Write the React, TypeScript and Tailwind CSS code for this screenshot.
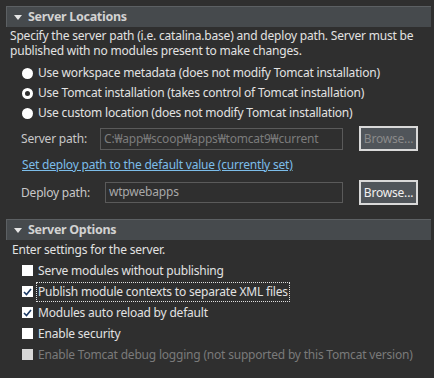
import React from "react";

const font = { fontFamily: '"Noto Sans", "Noto Sans CJK KR", sans-serif', letterSpacing: "-0.2px" };

function SectionHeader({ title }: { title: string }) {
  return (
    <div className="flex h-[21px] items-center border-t border-l border-[#5c6063] bg-[#464a4d] pl-[7px]">
      <svg width="8" height="5" viewBox="0 0 8 5" className="mr-[6px]">
        <path d="M0 0 H8 L4 5 Z" fill="#e6e6e6" />
      </svg>
      <span className="text-[12.5px] font-bold leading-none tracking-[-0.3px] text-[#d2d2d2]">{title}</span>
    </div>
  );
}

function Radio({ label, kind }: { label: string; kind: "solid" | "ring" }) {
  return (
    <div className="flex h-[20px] items-center pl-[16px]">
      {kind === "solid" ? (
        <span className="h-[11px] w-[11px] rounded-full bg-white" />
      ) : (
        <span className="h-[11px] w-[11px] rounded-full border-[3px] border-white bg-[#2f2f2f]" />
      )}
      <span className="ml-[5px] text-[12px] text-[#e2e2e2]">{label}</span>
    </div>
  );
}

function Check({
  label,
  checked = false,
  disabled = false,
  focused = false,
}: {
  label: string;
  checked?: boolean;
  disabled?: boolean;
  focused?: boolean;
}) {
  return (
    <div className="flex h-[21px] items-center pl-[16px]">
      <span
        className={
          disabled
            ? "flex h-[11px] w-[11px] items-center justify-center bg-[#d8d8d8]"
            : "flex h-[11px] w-[11px] items-center justify-center bg-white"
        }
      >
        {checked && (
          <svg width="9" height="8" viewBox="0 0 9 8">
            <path d="M1 4 L3.5 6.5 L8 1" fill="none" stroke="#1d3a64" strokeWidth="1.6" />
          </svg>
        )}
      </span>
      <span
        className={
          (focused ? "ml-[4px] px-[1px] outline-1 outline-dotted outline-[#e0e0e0] " : "ml-[5px] ") +
          (disabled ? "text-[12px] text-[#7a7a7a]" : "text-[12px] text-[#e2e2e2]")
        }
      >
        {label}
      </span>
    </div>
  );
}

function BrowseButton({ disabled = false }: { disabled?: boolean }) {
  return (
    <button
      className={
        "ml-[16px] h-[25px] w-[59px] border-[2px] border-[#d9d9d9] bg-[#50555a] text-[12px] " +
        (disabled ? "text-[#8a8a8a]" : "text-[#f0f0f0]")
      }
    >
      Browse...
    </button>
  );
}

export default function App() {
  return (
    <div className="h-[378px] w-[434px] overflow-hidden bg-[#2f2f2f] pl-[6px] pr-[3px] pt-[6px]" style={font}>
      <SectionHeader title="Server Locations" />
      <div className="pl-[4px] pt-[1px] text-[12px] leading-[15px] text-[#e2e2e2]">
        <div>Specify the server path (i.e. catalina.base) and deploy path. Server must be</div>
        <div>published with no modules present to make changes.</div>
      </div>

      <div className="mt-[5px] flex flex-col">
        <Radio kind="solid" label="Use workspace metadata (does not modify Tomcat installation)" />
        <Radio kind="ring" label="Use Tomcat installation (takes control of Tomcat installation)" />
        <Radio kind="solid" label="Use custom location (does not modify Tomcat installation)" />
      </div>

      <div className="mt-[3px] flex h-[25px] items-center pl-[15px]">
        <span className="w-[79px] text-[12px] text-[#c8c8c8]">Server path:</span>
        <div className="flex h-[22px] w-[243px] items-center border border-[#5a5a5a] px-[3px] text-[12px] text-[#7c7c7c]">
          C:₩app₩scoop₩apps₩tomcat9₩current
        </div>
        <BrowseButton disabled />
      </div>

      <div className="mt-[6px] pl-[16px] text-[12px] leading-[15px]">
        <span className="text-[#7cbde9] underline">Set deploy path to the default value (currently set)</span>
      </div>

      <div className="mt-[8px] flex h-[25px] items-center pl-[15px]">
        <span className="w-[84px] text-[12px] text-[#c8c8c8]">Deploy path:</span>
        <div className="flex h-[21px] w-[238px] items-start border border-[#5a5a5a] px-[3px] text-[12px] leading-[17px] text-[#a8a8a8]">
          wtpwebapps
        </div>
        <BrowseButton />
      </div>

      <div className="mt-[14px]">
        <SectionHeader title="Server Options" />
      </div>
      <div className="pl-[6px] pt-[2px] text-[12px] leading-[15px] text-[#e2e2e2]">Enter settings for the server.</div>
      <div className="mt-[3px] flex flex-col">
        <Check label="Serve modules without publishing" />
        <Check label="Publish module contexts to separate XML files" checked focused />
        <Check label="Modules auto reload by default" checked />
        <Check label="Enable security" />
        <Check label="Enable Tomcat debug logging (not supported by this Tomcat version)" disabled />
      </div>
    </div>
  );
}
